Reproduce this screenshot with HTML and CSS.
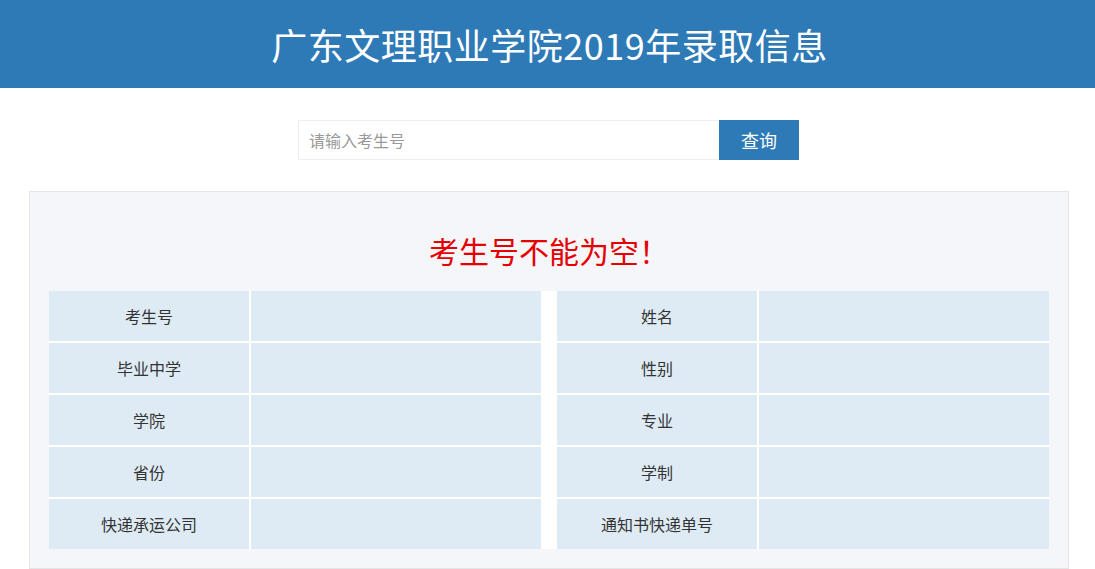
FILE: index.html
```html
<!DOCTYPE html>
<html lang="zh-CN">
<head>
  <meta charset="UTF-8">
  <meta name="viewport" content="width=device-width, initial-scale=1.0">
  <title>广东文理职业学院2019年录取信息</title>
  <link rel="stylesheet" href="styles.css">
</head>
<body>
  <div class="page-header">
    <h1>广东文理职业学院2019年录取信息</h1>
  </div>
  <form class="search-bar" onsubmit="return false">
    <input type="text" id="exam-no" placeholder="请输入考生号" />
    <button type="submit">查询</button>
  </form>
  <div class="result-panel">
    <h2 class="result-msg">考生号不能为空！</h2>
    <div class="result-tables">
      <div class="info-table">
        <div class="label">考生号</div><div class="value"></div>
        <div class="label">毕业中学</div><div class="value"></div>
        <div class="label">学院</div><div class="value"></div>
        <div class="label">省份</div><div class="value"></div>
        <div class="label">快递承运公司</div><div class="value"></div>
      </div>
      <div class="info-table">
        <div class="label">姓名</div><div class="value"></div>
        <div class="label">性别</div><div class="value"></div>
        <div class="label">专业</div><div class="value"></div>
        <div class="label">学制</div><div class="value"></div>
        <div class="label">通知书快递单号</div><div class="value"></div>
      </div>
    </div>
  </div>
</body>
</html>
```

FILE: styles.css
```css
* {
  box-sizing: border-box;
}
body, html {
  margin: 0;
  padding: 0;
  font-family: "Noto Sans CJK SC", "Liberation Sans", sans-serif;
  color: #333;
  background: #fff;
}
.page-header {
  background: #2e7ab7;
  height: 88px;
  display: flex;
  align-items: center;
  justify-content: center;
}
.page-header h1 {
  margin: 0 0 0 4px;
  color: #fff;
  font-size: 36px;
  font-weight: normal;
  line-height: 1;
  letter-spacing: 0.5px;
}
.search-bar {
  display: flex;
  justify-content: center;
  margin: 32px 0 31px;
  padding-left: 2px;
}
.search-bar input {
  width: 421px;
  height: 40px;
  border: 1px solid #eee;
  border-right: none;
  padding: 0 10px;
  font-size: 16px;
  font-family: inherit;
  outline: none;
}
.search-bar input::placeholder {
  color: #999;
}
.search-bar button {
  width: 80px;
  height: 40px;
  border: none;
  background: #2e7ab7;
  color: #fff;
  font-size: 18px;
  font-family: inherit;
  cursor: pointer;
}
.result-panel {
  width: 1040px;
  margin-left: 29px;
  background: #f4f6fa;
  border: 1px solid #e5e5e5;
  padding: 19px;
}
.result-msg {
  margin: 19px 0 21px;
  text-align: center;
  color: #e60000;
  font-size: 30px;
  font-weight: normal;
  line-height: 40px;
}
.result-tables {
  display: flex;
  gap: 16px;
  background: #fff;
}
.info-table {
  display: grid;
  grid-template-columns: 200px 290px;
  grid-auto-rows: 50px;
  gap: 2px;
}
.info-table div {
  background: #deebf5;
}
.info-table .label {
  display: flex;
  align-items: center;
  justify-content: center;
  font-size: 16px;
}
```
